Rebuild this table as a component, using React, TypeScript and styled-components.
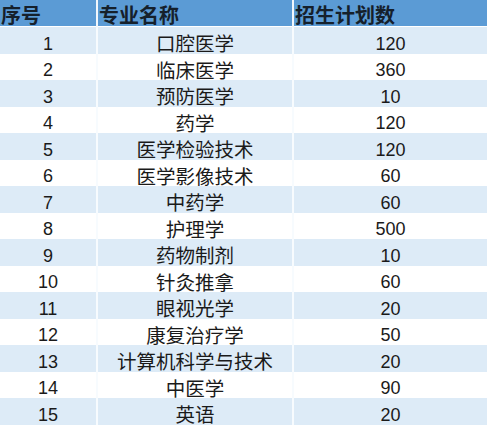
import React from 'react';
import styled, { createGlobalStyle } from 'styled-components';

const majors: [number, string, number][] = [
  [1, '口腔医学', 120],
  [2, '临床医学', 360],
  [3, '预防医学', 10],
  [4, '药学', 120],
  [5, '医学检验技术', 120],
  [6, '医学影像技术', 60],
  [7, '中药学', 60],
  [8, '护理学', 500],
  [9, '药物制剂', 10],
  [10, '针灸推拿', 60],
  [11, '眼视光学', 20],
  [12, '康复治疗学', 50],
  [13, '计算机科学与技术', 20],
  [14, '中医学', 90],
  [15, '英语', 20],
];

const App = () => {
  return (
    <>
      <GlobalStyle />
      <Table>
        <HeaderRow>
          <HeadCell>序号</HeadCell>
          <HeadCell>专业名称</HeadCell>
          <HeadCell>招生计划数</HeadCell>
        </HeaderRow>
        {majors.map(([no, name, plan]) => (
          <Row key={no} $striped={no % 2 === 1}>
            <NumCell>{no}</NumCell>
            <NameCell>{name}</NameCell>
            <NumCell>{plan}</NumCell>
          </Row>
        ))}
      </Table>
    </>
  );
};
export default App;

const GlobalStyle = createGlobalStyle`
  body {
    margin: 0;
    background: #fff;
    font-family: "Liberation Sans", "Noto Sans CJK SC", sans-serif;
  }
`;

const Table = styled.div`
  width: 487px;
  display: flex;
  flex-direction: column;
`;

const HeaderRow = styled.div`
  display: grid;
  grid-template-columns: 96px 196px 1fr;
  height: 26px;
  margin-bottom: 1px;
  background: #5b9bd5;
`;

const HeadCell = styled.div`
  display: flex;
  align-items: center;
  padding-left: 1px;
  font-family: "Noto Sans CJK SC", sans-serif;
  font-size: 20px;
  font-weight: 700;
  color: #15202b;
  & + & {
    border-left: 2px solid #f2f7fc;
  }
`;

const Row = styled.div<{ $striped: boolean }>`
  display: grid;
  grid-template-columns: 96px 196px 1fr;
  height: 26.5px;
  background: ${p => (p.$striped ? '#ddebf7' : '#ffffff')};
`;

const Cell = styled.div`
  display: flex;
  align-items: center;
  justify-content: center;
  color: #1a1a1a;
  & + & {
    border-left: 2px solid #f7fbfe;
  }
`;

const NumCell = styled(Cell)`
  padding-top: 4px;
  font-family: "Liberation Sans", sans-serif;
  font-size: 18px;
`;

const NameCell = styled(Cell)`
  padding-top: 1px;
  font-family: "Noto Sans CJK SC", sans-serif;
  font-size: 19.5px;
`;
